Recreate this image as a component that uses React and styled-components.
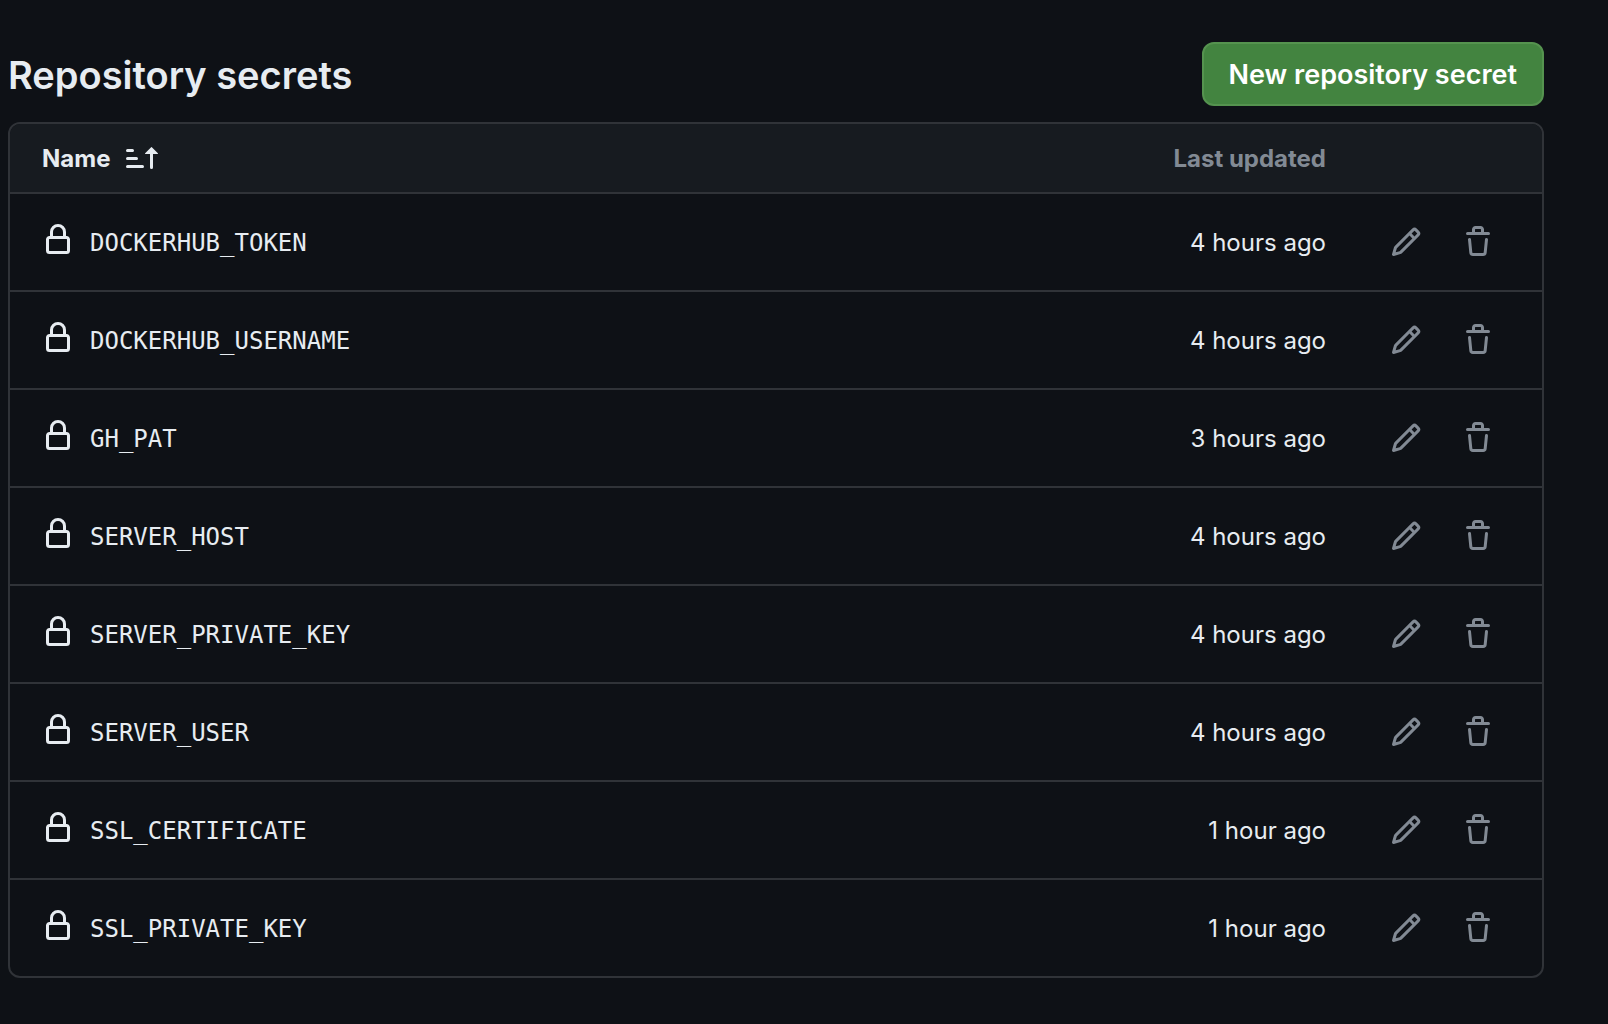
import React from "react";
import styled, { createGlobalStyle } from "styled-components";

const color = {
  canvas: "#0e1116",
  header: "#171b20",
  border: "#303338",
  text: "#e7ecf1",
  muted: "#828a94",
  green: "#438440",
  greenBorder: "#55934f",
};

const GlobalStyle = createGlobalStyle`
  *, *::before, *::after { box-sizing: border-box; }
  html { background: ${color.canvas}; }
  body {
    margin: 0;
    background: ${color.canvas};
    color: ${color.text};
    font-family: Inter, "Liberation Sans", sans-serif;
    font-size: 24px;
    line-height: 32px;
  }
`;

const Page = styled.main`
  padding: 42px 64px 46px 8px;
`;

const Heading = styled.header`
  display: flex;
  align-items: center;
  justify-content: space-between;
  margin-bottom: 16px;
`;

const Title = styled.h1`
  margin: 0;
  padding-top: 2px;
  font-size: 38px;
  line-height: 48px;
  font-weight: 600;
`;

const PrimaryButton = styled.button`
  height: 64px;
  padding: 2px 25px 0;
  border: 2px solid ${color.greenBorder};
  border-radius: 12px;
  background: ${color.green};
  color: #ffffff;
  font-family: inherit;
  font-size: 27px;
  line-height: 40px;
  font-weight: 600;
  cursor: pointer;
`;

const TableFrame = styled.div`
  border: 2px solid ${color.border};
  border-radius: 12px;
  overflow: hidden;
`;

const Table = styled.table`
  width: 100%;
  border-collapse: separate;
  border-spacing: 0;
`;

const HeadCell = styled.th`
  height: 70px;
  padding: ${(p) => (p.$end ? "2px 48px 0 0" : "0 0 0 32px")};
  background: ${color.header};
  border-bottom: 2px solid ${color.border};
  color: ${(p) => (p.$end ? color.muted : color.text)};
  font-weight: 700;
  text-align: ${(p) => (p.$end ? "right" : "left")};
`;

const SortButton = styled.button`
  display: flex;
  align-items: center;
  gap: 16px;
  padding: 0;
  border: 0;
  background: none;
  color: inherit;
  font: inherit;
  cursor: pointer;
`;

const SortLabel = styled.span`
  padding-top: 2px;
`;

const Row = styled.tr`
  & > * {
    height: 98px;
    border-bottom: 2px solid ${color.border};
  }
  &:last-child > * {
    height: 96px;
    border-bottom: 0;
  }
`;

const NameCell = styled.th`
  padding: 2px 0 0 32px;
  font-weight: 400;
  text-align: left;
`;

const Secret = styled.div`
  display: flex;
  align-items: center;
  gap: 16px;
`;

const LockSlot = styled.span`
  display: flex;
  padding-bottom: 6px;
`;

const SecretName = styled.code`
  font-family: "DejaVu Sans Mono", "Liberation Mono", monospace;
  font-size: 24px;
`;

const DateCell = styled.td`
  padding: 2px 48px 0 0;
  text-align: right;
  white-space: nowrap;
`;

const ActionsCell = styled.td`
  width: 168px;
  padding: 0 32px 0 0;
`;

const Actions = styled.div`
  display: flex;
  gap: 8px;
`;

const IconButton = styled.button`
  display: flex;
  align-items: center;
  justify-content: center;
  width: 64px;
  height: 64px;
  padding: 0;
  border: 0;
  border-radius: 12px;
  background: none;
  color: ${color.muted};
  cursor: pointer;
`;

const Svg = styled.svg`
  display: block;
  flex: none;
  width: 32px;
  height: 32px;
  fill: currentColor;
`;

const paths = {
  lock: "M4 4a4 4 0 0 1 8 0v2h.25c.966 0 1.75.784 1.75 1.75v5.5A1.75 1.75 0 0 1 12.25 15h-8.5A1.75 1.75 0 0 1 2 13.25v-5.5C2 6.784 2.784 6 3.75 6H4Zm8.25 3.5h-8.5a.25.25 0 0 0-.25.25v5.5c0 .138.112.25.25.25h8.5a.25.25 0 0 0 .25-.25v-5.5a.25.25 0 0 0-.25-.25ZM10.5 6V4a2.5 2.5 0 1 0-5 0v2Z",
  pencil:
    "M11.013 1.427a1.75 1.75 0 0 1 2.474 0l1.086 1.086a1.75 1.75 0 0 1 0 2.474l-8.61 8.61c-.21.21-.47.364-.756.445l-3.251.93a.75.75 0 0 1-.927-.928l.929-3.25c.081-.286.235-.547.445-.758l8.61-8.61Zm.176 4.823L9.75 4.81l-6.286 6.287a.253.253 0 0 0-.064.108l-.558 1.953 1.953-.558a.253.253 0 0 0 .108-.064Zm1.238-3.763a.25.25 0 0 0-.354 0L10.811 3.75l1.439 1.44 1.263-1.263a.25.25 0 0 0 0-.354Z",
  trash:
    "M11 1.75V3h2.25a.75.75 0 0 1 0 1.5H2.75a.75.75 0 0 1 0-1.5H5V1.75C5 .784 5.784 0 6.75 0h2.5C10.216 0 11 .784 11 1.75ZM4.496 6.675l.66 6.6a.25.25 0 0 0 .249.225h5.19a.25.25 0 0 0 .249-.225l.66-6.6a.75.75 0 0 1 1.492.149l-.66 6.6A1.748 1.748 0 0 1 10.595 15h-5.19a1.75 1.75 0 0 1-1.741-1.575l-.66-6.6a.75.75 0 1 1 1.492-.15ZM6.5 1.75V3h3V1.75a.25.25 0 0 0-.25-.25h-2.5a.25.25 0 0 0-.25.25Z",
  sort: "m12.927 2.573 3 3A.25.25 0 0 1 15.75 6H13.5v6.75a.75.75 0 0 1-1.5 0V6H9.75a.25.25 0 0 1-.177-.427l3-3a.25.25 0 0 1 .354 0ZM0 12.25a.75.75 0 0 1 .75-.75h7.5a.75.75 0 0 1 0 1.5H.75a.75.75 0 0 1-.75-.75Zm0-4a.75.75 0 0 1 .75-.75h4.5a.75.75 0 0 1 0 1.5H.75A.75.75 0 0 1 0 8.25Zm0-4a.75.75 0 0 1 .75-.75h2.5a.75.75 0 0 1 0 1.5H.75A.75.75 0 0 1 0 4.25Z",
};

function Icon({ name }) {
  return (
    <Svg viewBox="0 0 16 16" aria-hidden="true">
      <path d={paths[name]} />
    </Svg>
  );
}

const secrets = [
  { name: "DOCKERHUB_TOKEN", updated: "4 hours ago" },
  { name: "DOCKERHUB_USERNAME", updated: "4 hours ago" },
  { name: "GH_PAT", updated: "3 hours ago" },
  { name: "SERVER_HOST", updated: "4 hours ago" },
  { name: "SERVER_PRIVATE_KEY", updated: "4 hours ago" },
  { name: "SERVER_USER", updated: "4 hours ago" },
  { name: "SSL_CERTIFICATE", updated: "1 hour ago" },
  { name: "SSL_PRIVATE_KEY", updated: "1 hour ago" },
];

export default function App() {
  return (
    <>
      <GlobalStyle />
      <Page>
        <Heading>
          <Title id="secrets-title">Repository secrets</Title>
          <PrimaryButton type="button">New repository secret</PrimaryButton>
        </Heading>
        <TableFrame>
          <Table aria-labelledby="secrets-title">
            <thead>
              <tr>
                <HeadCell scope="col" aria-sort="ascending">
                  <SortButton type="button">
                    <SortLabel>Name</SortLabel>
                    <Icon name="sort" />
                  </SortButton>
                </HeadCell>
                <HeadCell scope="col" $end>
                  Last updated
                </HeadCell>
                <HeadCell as="td" />
              </tr>
            </thead>
            <tbody>
              {secrets.map((secret) => (
                <Row key={secret.name}>
                  <NameCell scope="row">
                    <Secret>
                      <LockSlot>
                        <Icon name="lock" />
                      </LockSlot>
                      <SecretName>{secret.name}</SecretName>
                    </Secret>
                  </NameCell>
                  <DateCell>{secret.updated}</DateCell>
                  <ActionsCell>
                    <Actions>
                      <IconButton type="button" aria-label={`Edit ${secret.name}`}>
                        <Icon name="pencil" />
                      </IconButton>
                      <IconButton type="button" aria-label={`Delete ${secret.name}`}>
                        <Icon name="trash" />
                      </IconButton>
                    </Actions>
                  </ActionsCell>
                </Row>
              ))}
            </tbody>
          </Table>
        </TableFrame>
      </Page>
    </>
  );
}
